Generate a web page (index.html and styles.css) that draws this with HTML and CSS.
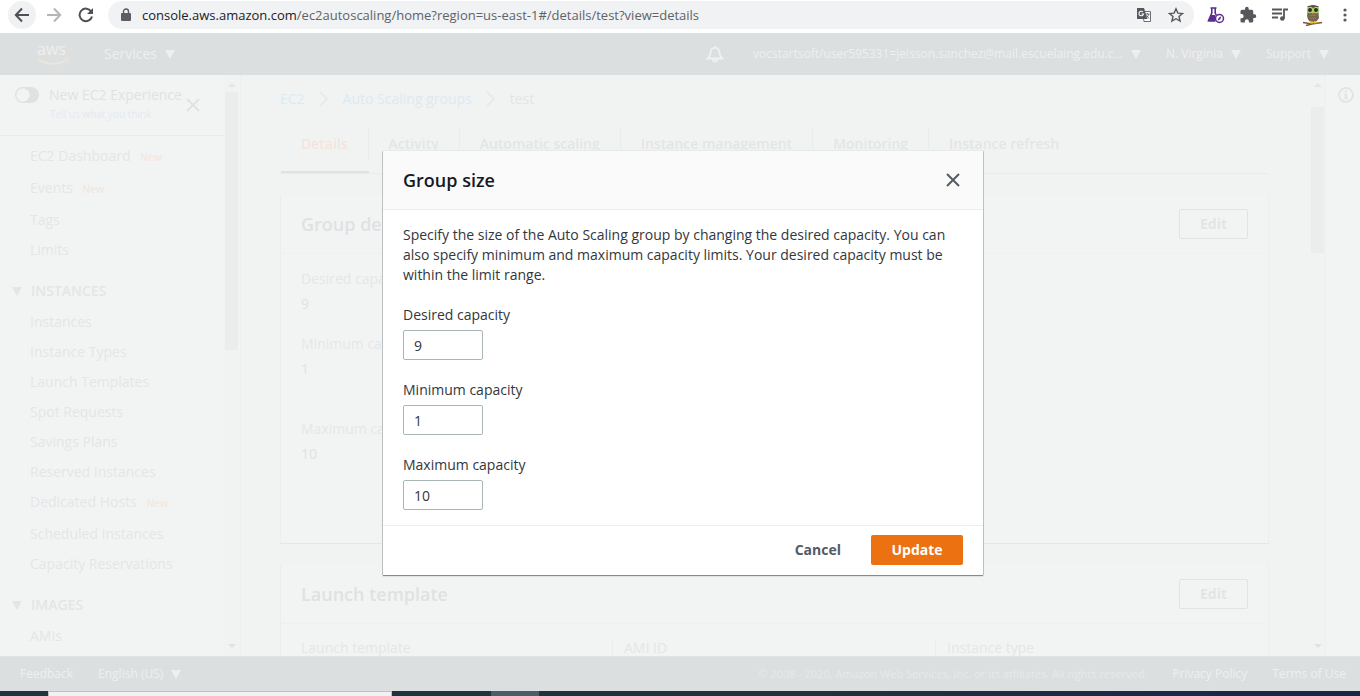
FILE: index.html
```html
<!DOCTYPE html>
<html lang="en">
<head>
<meta charset="utf-8">
<title>Auto Scaling groups | EC2 Management Console</title>
<link rel="stylesheet" href="styles.css">
</head>
<body>
<header class="browser">
  <button class="nav-btn nav-btn-active" aria-label="Back"><svg width="16" height="16" viewBox="0 0 16 16" fill="none" stroke="#4d5156" stroke-width="2"><path d="M15 8H2M8 1.500L1.800 8L8 14.500"/></svg></button>
  <button class="nav-btn" aria-label="Forward"><svg width="16" height="16" viewBox="0 0 16 16" fill="none" stroke="#b4b6b9" stroke-width="2"><path d="M1 8h13M8 1.500L14.200 8L8 14.500"/></svg></button>
  <button class="nav-btn" aria-label="Reload"><svg width="16" height="16" viewBox="0 0 16 16"><path d="M13.200 4.500A6.300 6.300 0 1 0 14 9.500" fill="none" stroke="#4d5156" stroke-width="2"/><path d="M15 1v6H9z" fill="#4d5156"/></svg></button>
  <div class="address">
    <svg width="10" height="14" viewBox="0 0 10 14"><rect x="0" y="5" width="10" height="8" rx="1" fill="#5a5d61"/><path d="M2.500 5V3.500a2.500 2.500 0 0 1 5 0V5" fill="none" stroke="#5a5d61" stroke-width="1.400"/></svg>
    <div class="url" role="textbox" aria-label="Address" contenteditable="true"><span class="url-host">console.aws.amazon.com</span>/ec2autoscaling/home?region=us-east-1#/details/test?view=details</div>
    <button class="icon-btn" aria-label="Translate"><svg width="16" height="16" viewBox="0 0 16 16"><path d="M6.500 4.500h8v10H8z" fill="#fff" stroke="#6b6e72"/><path d="M1 1h7l3.500 11H1z" fill="#55585c"/><path d="M7 5A2.300 2.300 0 1 0 7.500 7H5.500" fill="none" stroke="#fff" stroke-width="1.100"/><path d="M9.500 7h4M11.500 6v1M13 7q-1 3-3 4M10.500 8.500l2.500 3" fill="none" stroke="#6b6e72"/></svg></button>
    <button class="icon-btn" aria-label="Bookmark"><svg width="16" height="16" viewBox="0 0 16 16"><path d="M8 1.800l1.900 4.300 4.600.4-3.500 3 1.100 4.600L8 11.700l-4.100 2.400L5 9.500l-3.500-3 4.600-.4z" fill="none" stroke="#55585c" stroke-width="1.400"/></svg></button>
  </div>
  <div class="extensions">
    <button class="icon-btn" aria-label="Lab extension"><svg width="18" height="18" viewBox="0 0 18 18"><path d="M3.500 2h6M4.800 2v5L1.500 14.800h7M8.200 2v5l1 2" fill="none" stroke="#5b2d91" stroke-width="1.600"/><path d="M4 9h4.500L8 15.500H1.300z" fill="#5b2d91"/><circle cx="12.500" cy="12.500" r="4" fill="#fff" stroke="#5b2d91" stroke-width="1.500"/><path d="M14.500 10.300l-1.200 3-2.800 1.400 1.200-3z" fill="#5b2d91"/></svg></button>
    <button class="icon-btn" aria-label="Extensions"><svg width="18" height="18" viewBox="0 0 24 24"><path d="M20.500 11H19V7a2 2 0 0 0-2-2h-4V3.500a2.500 2.500 0 0 0-5 0V5H4a2 2 0 0 0-2 2v3.800h1.500a2.700 2.700 0 0 1 0 5.400H2V20a2 2 0 0 0 2 2h3.800v-1.500a2.700 2.700 0 0 1 5.400 0V22H17a2 2 0 0 0 2-2v-4h1.500a2.500 2.500 0 0 0 0-5z" fill="#55585c"/></svg></button>
    <button class="icon-btn" aria-label="Media controls"><svg width="18" height="16" viewBox="0 0 18 16"><path d="M1 2.500h10M1 6.500h10M1 10.500h6" stroke="#55585c" stroke-width="1.800"/><circle cx="11.300" cy="11.500" r="2.300" fill="#55585c"/><path d="M13 11.500V2.500h4" fill="none" stroke="#55585c" stroke-width="1.800"/></svg></button>
    <button class="icon-btn" aria-label="Profile"><svg width="20" height="22" viewBox="0 0 20 22"><path d="M5 4Q10 0 15 4L16 14Q14 18 10 18.500Q5 18 4 12z" fill="#7a6650"/><path d="M4 2.500Q10-.5 16 2.500L14 5H6z" fill="#5d4a34"/><circle cx="7" cy="6" r="2.600" fill="#262b1f" stroke="#a9cf76" stroke-width="1.300"/><circle cx="13" cy="6" r="2.600" fill="#262b1f" stroke="#a9cf76" stroke-width="1.300"/><path d="M9 8h2l-1 2.500z" fill="#f0b91e"/><path d="M7 11.500h6M7.500 14h5" stroke="#8c7a63"/><path d="M0 18.500l9 1.500 10-1.500M3 21.500l6-1.500" stroke="#7b5734" stroke-width="1.500" fill="none"/><path d="M7.500 17v2.500M9 17v2.500M11.500 17v2.500M13 17v2.500" stroke="#f0b91e" stroke-width="1.200"/></svg></button>
    <button class="icon-btn" aria-label="Menu"><svg width="4" height="14" viewBox="0 0 4 14" fill="#55585c"><circle cx="2" cy="2" r="1.600"/><circle cx="2" cy="7" r="1.600"/><circle cx="2" cy="12" r="1.600"/></svg></button>
  </div>
</header>

<div class="console">
  <header class="topbar">
    <a class="logo" href="#" aria-label="AWS home"><span class="logo-word">aws</span><svg width="34" height="8" viewBox="0 0 34 8"><path d="M1 1Q15 10 30 2.500" fill="none" stroke="#ece5dc" stroke-width="1.800"/><path d="M27 1.200q5-1.500 5.300-.4t-1.800 5" fill="none" stroke="#ece5dc" stroke-width="1.300"/></svg></a>
    <button class="menu menu-services">Services <i class="caret"></i></button>
    <div class="topbar-right">
      <button class="menu bell" aria-label="Notifications"><svg width="18" height="18" viewBox="0 0 18 18" fill="none" stroke="#f0f1f1" stroke-width="1.800"><path d="M9 1v1.500M4.500 8C4.500 4.500 6 2.800 9 2.800S13.500 4.500 13.500 8C13.500 10.500 15 11.500 16.500 13.500H1.500C3 11.500 4.500 10.500 4.500 8zM6.800 14c.3 3.500 4.100 3.500 4.400 0"/></svg></button>
      <button class="menu account">vocstartsoft/user595331=jeisson.sanchez@mail.escuelaing.edu.c... <i class="caret"></i></button>
      <button class="menu">N. Virginia <i class="caret"></i></button>
      <button class="menu">Support <i class="caret"></i></button>
    </div>
  </header>

  <div class="workspace">
    <aside class="sidebar">
      <div class="sidebar-body">
        <div class="experience">
          <input class="toggle" type="checkbox" id="experience">
          <div class="experience-text">
            <label for="experience">New EC2 Experience</label>
            <a href="#">Tell us what you think</a>
          </div>
          <button class="close-nav" aria-label="Close navigation"><svg width="14" height="14" viewBox="0 0 14 14" stroke="#dfe2e3" stroke-width="2"><path d="M1 1l12 12M13 1L1 13"/></svg></button>
        </div>
        <nav class="side-nav">
          <a class="tall" href="#">EC2 Dashboard <b>New</b></a>
          <a class="tall" href="#">Events <b>New</b></a>
          <a href="#">Tags</a>
          <a href="#">Limits</a>
          <button class="group"><i class="caret"></i>INSTANCES</button>
          <a href="#">Instances</a>
          <a href="#">Instance Types</a>
          <a href="#">Launch Templates</a>
          <a href="#">Spot Requests</a>
          <a href="#">Savings Plans</a>
          <a href="#">Reserved Instances</a>
          <a class="tall" href="#">Dedicated Hosts <b>New</b></a>
          <a href="#">Scheduled Instances</a>
          <a href="#">Capacity Reservations</a>
          <button class="group"><i class="caret"></i>IMAGES</button>
          <a href="#">AMIs</a>
        </nav>
      </div>
      <div class="scroll"><i class="up"></i><span class="thumb thumb-side"></span><i class="down"></i></div>
    </aside>

    <main class="content">
      <nav class="breadcrumbs" aria-label="Breadcrumb">
        <a href="#">EC2</a>
        <svg width="10" height="16" viewBox="0 0 10 16"><path d="M1 1l7 7-7 7"/></svg>
        <a href="#">Auto Scaling groups</a>
        <svg width="10" height="16" viewBox="0 0 10 16"><path d="M1 1l7 7-7 7"/></svg>
        <span>test</span>
      </nav>
      <div class="tabs" role="tablist">
        <button class="tab tab-active" role="tab" aria-selected="true"><span>Details</span></button>
        <button class="tab" role="tab"><span>Activity</span></button>
        <button class="tab" role="tab"><span>Automatic scaling</span></button>
        <button class="tab" role="tab"><span>Instance management</span></button>
        <button class="tab" role="tab"><span>Monitoring</span></button>
        <button class="tab" role="tab"><span>Instance refresh</span></button>
      </div>
      <section class="card card-group">
        <header class="card-head"><h2>Group details</h2><button class="edit">Edit</button></header>
        <dl class="facts">
          <div><dt>Desired capacity</dt><dd>9</dd></div>
          <div class="fact-gap"><dt>Minimum capacity</dt><dd>1</dd></div>
          <div><dt>Maximum capacity</dt><dd>10</dd></div>
        </dl>
      </section>
      <section class="card">
        <header class="card-head"><h2>Launch template</h2><button class="edit">Edit</button></header>
        <div class="columns"><div>Launch template</div><div>AMI ID</div><div>Instance type</div></div>
      </section>
    </main>
    <div class="scroll scroll-main"><i class="up"></i><span class="thumb thumb-main"></span><i class="down"></i></div>
    <aside class="help"><button aria-label="Open help"><svg width="16" height="16" viewBox="0 0 16 16"><circle cx="8" cy="8" r="7" fill="none" stroke="#e1e4e4" stroke-width="1.800"/><path d="M7 3.500h2v2H7zM6 6.800h3v4h1.200V12H5.800v-1.200H7V8H6z" fill="#e1e4e4"/></svg></button></aside>
  </div>

  <footer class="footer">
    <a href="#">Feedback</a>
    <button class="menu">English (US) <i class="caret"></i></button>
    <span class="copyright">© 2008 - 2020, Amazon Web Services, Inc. or its affiliates. All rights reserved.</span>
    <a href="#">Privacy Policy</a>
    <a href="#">Terms of Use</a>
  </footer>

  <div class="overlay">
    <form class="modal" role="dialog" aria-labelledby="modal-title">
      <header class="modal-head">
        <h1 id="modal-title">Group size</h1>
        <button type="button" aria-label="Close"><svg width="14" height="14" viewBox="0 0 14 14" stroke="#545b64" stroke-width="2"><path d="M1 1l12 12M13 1L1 13"/></svg></button>
      </header>
      <div class="modal-body">
        <p>Specify the size of the Auto Scaling group by changing the desired capacity. You can also specify minimum and maximum capacity limits. Your desired capacity must be within the limit range.</p>
        <div class="field"><label for="desired">Desired capacity</label><input id="desired" type="text" inputmode="numeric" value="9"></div>
        <div class="field"><label for="minimum">Minimum capacity</label><input id="minimum" type="text" inputmode="numeric" value="1"></div>
        <div class="field"><label for="maximum">Maximum capacity</label><input id="maximum" type="text" inputmode="numeric" value="10"></div>
      </div>
      <footer class="modal-foot">
        <button type="button" class="cancel">Cancel</button>
        <button type="submit" class="update">Update</button>
      </footer>
    </form>
  </div>
</div>

<div class="taskbar"><span class="task-search"></span><span class="task-active"></span></div>
</body>
</html>
```

FILE: styles.css
```css
* { box-sizing: border-box; }

body {
  margin: 0;
  height: 100vh;
  display: flex;
  flex-direction: column;
  overflow: hidden;
  background: #fff;
  color: #e3e6e6;
  font: 14px/20px "Open Sans", "Noto Sans", sans-serif;
}

button {
  font: inherit;
  color: inherit;
  background: none;
  border: 0;
  padding: 0;
}

a { color: inherit; text-decoration: none; }
svg { display: block; flex: none; }
h1, h2, p, dl, dd { margin: 0; }

/* Browser toolbar */
.browser {
  display: flex;
  align-items: center;
  height: 33px;
  padding: 0 13px 3px 8px;
  gap: 4px;
}

.nav-btn {
  display: grid;
  place-items: center;
  width: 28px;
  height: 28px;
  border-radius: 50%;
}

.nav-btn-active { background: #f0f1f2; }

.address {
  flex: 1;
  display: flex;
  align-items: center;
  height: 28px;
  margin-left: 4px;
  padding: 0 10px 0 13px;
  border-radius: 14px;
  background: #f0f2f4;
}

.url {
  flex: 1;
  margin-left: 11px;
  overflow: hidden;
  white-space: nowrap;
  color: #5f6368;
  font-size: 13px;
}

.url-host { color: #202124; }
.icon-btn { display: grid; place-items: center; }
.address .icon-btn + .icon-btn { margin-left: 16px; }

.extensions {
  display: flex;
  align-items: center;
  gap: 14px;
  margin-left: 9px;
}

.extensions .icon-btn:last-child { margin-left: 6px; }

/* Console chrome */
.console {
  position: relative;
  flex: 1;
  min-height: 0;
  display: flex;
  flex-direction: column;
  background: #f1f3f3;
}

.caret {
  display: inline-block;
  border: 5px solid transparent;
  border-top: 9px solid currentColor;
  border-bottom: 0;
}

.topbar {
  display: flex;
  align-items: center;
  height: 42px;
  padding: 0 31px 0 36px;
  background: #dcdfe0;
  color: #eeefef;
}

.logo-word {
  display: block;
  height: 15px;
  padding-left: 1px;
  font-size: 16px;
  line-height: 12px;
}

.menu {
  display: flex;
  align-items: center;
  gap: 8px;
  font-size: 12px;
  white-space: nowrap;
}

.menu-services { margin-left: 34px; font-size: 14px; }

.topbar-right {
  display: flex;
  align-items: center;
  gap: 25px;
  margin-left: auto;
}

.bell { margin-right: 4px; }

.workspace {
  flex: 1;
  min-height: 0;
  display: flex;
  overflow: hidden;
}

/* Side navigation */
.sidebar {
  display: flex;
  width: 241px;
  flex: none;
  background: #f2f4f4;
  border-right: 1px solid #ecefef;
}

.sidebar-body { flex: 1; min-width: 0; overflow: hidden; }

.experience {
  display: flex;
  height: 61px;
  padding: 10px 24px 0 15px;
  border-bottom: 1px solid #e7eaea;
}

.toggle {
  appearance: none;
  width: 24px;
  height: 16px;
  margin: 2px 10px 0 0;
  border-radius: 8px;
  background: radial-gradient(circle at 8px 8px, #f2f4f4 6px, #dfe2e3 7px);
}

.experience-text { display: flex; flex-direction: column; white-space: nowrap; }
.experience-text label { color: #e0e2e3; }
.experience-text a { color: #e2e9ef; font-size: 10px; line-height: 18px; padding-left: 1px; }
.close-nav { align-self: flex-start; margin: 13px 0 0 auto; }

.side-nav { display: flex; flex-direction: column; padding-top: 5px; }
.side-nav a { flex: none; height: 30px; padding-left: 30px; line-height: 30px; }
.side-nav .tall { height: 32px; line-height: 30px; }
.side-nav b { margin-left: 6px; color: #f4e6e0; font-size: 10px; font-weight: 600; }

.group {
  display: flex;
  align-items: center;
  flex: none;
  gap: 9px;
  height: 42px;
  padding: 10px 0 0 12px;
  font-weight: 600;
}

/* Scroll bars */
.scroll {
  display: flex;
  flex-direction: column;
  align-items: center;
  width: 15px;
  margin-right: 1px;
  padding: 8px 0;
  background: #f1f3f3;
}

.scroll i { border: 4px solid transparent; }
.scroll .up { border-top: 0; border-bottom-color: #e3e6e6; }
.scroll .down { margin-top: auto; border-bottom: 0; border-top-color: #dfe2e2; }
.thumb { width: 13px; background: #ebeded; }
.thumb-side { height: 258px; margin-top: 5px; }
.thumb-main { height: 146px; margin-top: 20px; }
.scroll-main { margin-right: 0; }

.help {
  width: 35px;
  flex: none;
  padding: 12px 0 0 12px;
  background: #f2f4f4;
  border-left: 1px solid #ecefef;
}

/* Main content */
.content { flex: 1; min-width: 0; padding: 14px 41px 0 39px; overflow: hidden; }

.breadcrumbs { display: flex; align-items: center; gap: 14px; height: 20px; }
.breadcrumbs a { color: #dde9f0; }
.breadcrumbs svg { fill: none; stroke: #e7eaea; stroke-width: 2; }

.tabs {
  display: flex;
  height: 65px;
  padding: 20px 0 0 1px;
  border-bottom: 1px solid #e9ecec;
}

.tab { height: 44px; font-weight: 600; white-space: nowrap; }

.tab span {
  display: block;
  height: 30px;
  margin-bottom: 14px;
  padding: 0 20px;
  line-height: 30px;
  border-right: 1px solid #e9ecec;
}

.tab:last-child span { border-right: 0; }
.tab-active { color: #f6e4dc; border-bottom: 2px solid #dfe2e2; }
.tab-active span { margin-bottom: 12px; }

.card {
  margin-top: 20px;
  background: #f2f4f4;
  border: 1px solid #eceeee;
  border-top-color: #f0f2f2;
  border-bottom-color: #e4e7e7;
}

.card-group { height: 350px; }

.card-head {
  display: flex;
  align-items: center;
  justify-content: space-between;
  height: 59px;
  padding: 0 20px;
  border-bottom: 1px solid #eff1f1;
}

.card-head h2 { font-size: 18px; font-weight: 600; line-height: 24px; color: #dfe1e2; }

.edit {
  width: 69px;
  height: 30px;
  border: 1px solid #e1e4e4;
  border-radius: 2px;
  font-weight: 700;
  color: #e2e4e6;
}

.facts { padding: 15px 20px; }
.facts > div { height: 65px; }
.facts > .fact-gap { height: 85px; }
.facts dt { height: 25px; color: #e4e7e7; }
.facts dd { color: #dfe2e2; }

.columns { display: flex; padding: 16px 20px; line-height: 16px; }

.columns div {
  box-sizing: content-box;
  flex: 1 1 0;
  padding: 0 10px 0 11px;
  border-left: 1px solid #eceeee;
}

.columns div:first-child { padding-left: 0; border-left: 0; }
.columns div:last-child { padding-right: 0; }

.footer {
  display: flex;
  align-items: center;
  height: 35px;
  padding: 0 14px 0 20px;
  gap: 25px;
  background: #dcdfe0;
  border-top: 1px solid #e2e5e5;
  color: #eeefef;
  font-size: 12px;
  white-space: nowrap;
}

.copyright { margin-left: auto; color: #e7e9e9; font-size: 11px; }

/* Dialog */
.overlay {
  position: absolute;
  inset: 0;
  display: flex;
  align-items: center;
  justify-content: center;
  padding-top: 2px;
}

.modal {
  width: 600px;
  max-width: 100%;
  margin-left: 6px;
  background: #fff;
  color: #32373c;
  box-shadow: 0 1px 1px #7f8c92, 1px 0 0 #c8cccd, -1px 0 0 #c8cccd, 0 -1px 0 #e8eaea;
}

.modal-head {
  display: flex;
  align-items: center;
  justify-content: space-between;
  height: 59px;
  padding: 0 23px 0 20px;
  background: #fafafa;
  border-bottom: 1px solid #eaeded;
}

.modal-head h1 { color: #16191f; font-size: 18px; font-weight: 600; line-height: 24px; }
.modal-body { padding: 15px 20px; }
.field { margin-top: 20px; }
.field label { display: block; height: 25px; }

.field input {
  display: block;
  width: 80px;
  height: 30px;
  padding: 0 10px;
  border: 1px solid #aab7b8;
  border-radius: 2px;
  background: #fff;
  color: #32373c;
  font: inherit;
}

.modal-foot {
  display: flex;
  justify-content: flex-end;
  align-items: center;
  height: 50px;
  padding: 0 20px 1px;
  gap: 30px;
  border-top: 1px solid #eaeded;
  font-weight: 700;
}

.cancel { color: #545b64; }

.update {
  width: 92px;
  height: 30px;
  border-radius: 2px;
  background: #ec7211;
  color: #fff;
}

/* Desktop task bar */
.taskbar {
  display: flex;
  flex: none;
  height: 5px;
  padding-left: 48px;
  gap: 99px;
  background: linear-gradient(90deg, #1f3640, #20313f 60%, #1b2547);
}

.task-search { width: 344px; background: #f1f1f1; border: 1px solid #bfc1c2; border-bottom: 0; }
.task-active { width: 48px; background: #4d5d68; }
```
